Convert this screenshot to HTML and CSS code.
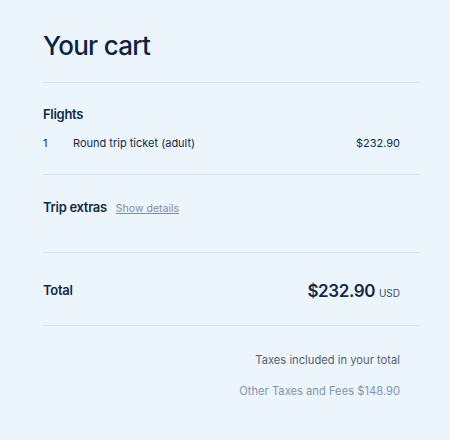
FILE: index.html
```html
<!DOCTYPE html>
<html lang="en">
<head>
    <meta charset="UTF-8">
    <meta name="viewport" content="width=device-width, initial-scale=1.0">
    <title>Your cart</title>
    <link rel="stylesheet" href="styles.css">
</head>
<body>
    <div class="cart">
        <div class="cart-header">
            <h1>Your cart</h1>
        </div>

        <div class="section flights">
            <div class="section-title">Flights</div>
            <div class="item-row">
                <span class="qty">1</span>
                <span class="item-name">Round trip ticket (adult)</span>
                <span class="item-price">$232.90</span>
            </div>
        </div>

        <div class="section extras">
            <div class="section-title">Trip extras <a href="#" class="details-link">Show details</a></div>
        </div>

        <div class="section total">
            <div class="total-label">Total</div>
            <div class="total-amount">$232.90 <span class="currency">USD</span></div>
        </div>

        <div class="tax-notes">
            <div class="tax-line">Taxes included in your total</div>
            <div class="tax-line muted">Other Taxes and Fees $148.90</div>
        </div>
    </div>
</body>
</html>
```

FILE: styles.css
```css
body {
    margin: 0;
    background-color: #edf5fc;
    color: #102a48;
    font-family: Inter, "Noto Sans", sans-serif;
}
.cart {
    padding: 0 30px 0 43px;
}
.cart-header {
    height: 82px;
    border-bottom: 1px solid #dde3e8;
    display: flex;
    align-items: flex-start;
}
h1 {
    margin: 31px 0 0;
    font-size: 26px;
    line-height: 30px;
    font-weight: 500;
    letter-spacing: -0.7px;
    color: #0c2442;
}
.section {
    border-bottom: 1px solid #dde3e8;
}
.section-title {
    font-size: 13px;
    font-weight: 600;
    line-height: 18px;
    letter-spacing: -0.3px;
}
.flights {
    height: 92px;
    padding-top: 22px;
    box-sizing: border-box;
}
.item-row {
    display: flex;
    font-size: 11px;
    line-height: 16px;
    margin-top: 12px;
    padding-right: 20px;
}
.qty {
    width: 30px;
}
.item-name {
    flex: 1;
}
.extras {
    height: 78px;
    padding-top: 23px;
    box-sizing: border-box;
}
.details-link {
    margin-left: 6px;
    font-size: 10.5px;
    font-weight: 400;
    letter-spacing: 0;
    color: #7d8ea3;
}
.total {
    height: 73px;
    display: flex;
    justify-content: space-between;
    align-items: center;
    padding-right: 20px;
    box-sizing: border-box;
}
.total-label {
    font-size: 13px;
    font-weight: 600;
    letter-spacing: -0.3px;
    padding-top: 1px;
}
.total-amount {
    font-size: 17px;
    font-weight: 600;
    letter-spacing: -0.4px;
    padding-top: 4px;
}
.currency {
    font-size: 10px;
    font-weight: 400;
    letter-spacing: 0;
    color: #3d4f66;
}
.tax-notes {
    padding: 26px 20px 0 0;
    text-align: right;
    font-size: 11.2px;
    line-height: 16px;
    color: #55606d;
}
.tax-line + .tax-line {
    margin-top: 15px;
}
.muted {
    color: #8494a8;
}
```
